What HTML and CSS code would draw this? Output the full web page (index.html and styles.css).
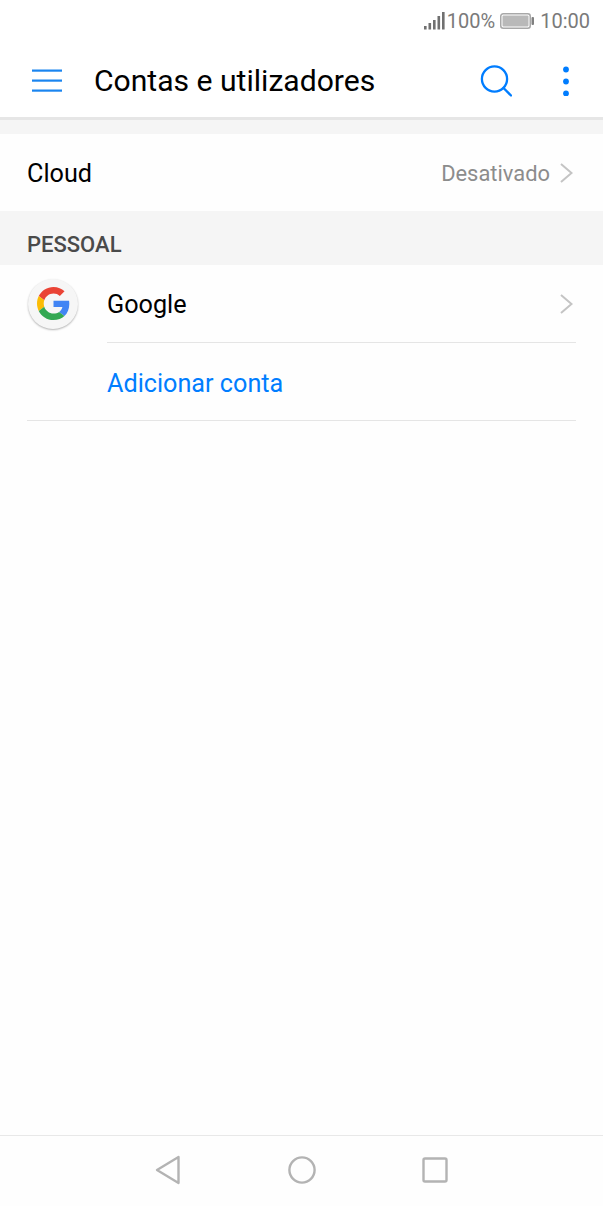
FILE: index.html
```html
<!DOCTYPE html>
<html lang="pt">
<head>
    <meta charset="UTF-8">
    <meta name="viewport" content="width=device-width, initial-scale=1.0">
    <title>Contas e utilizadores</title>
    <link rel="stylesheet" href="styles.css">
</head>
<body>
<div class="screen">
    <div class="status-bar">
        <svg class="signal" width="21" height="20" viewBox="0 0 21 20">
            <rect x="0" y="15" width="2.6" height="3.5" fill="#707070"/>
            <rect x="4.5" y="12" width="2.6" height="6.5" fill="#707070"/>
            <rect x="9" y="9" width="2.6" height="9.5" fill="#707070"/>
            <rect x="13.5" y="5" width="2.6" height="13.5" fill="#707070"/>
            <rect x="18" y="1" width="2.6" height="17.5" fill="#707070"/>
        </svg>
        <span class="status-text">100%</span>
        <svg class="battery" width="35" height="18" viewBox="0 0 35 18">
            <rect x="0.75" y="1.75" width="29.5" height="14.5" rx="2.5" fill="none" stroke="#a8a8a8" stroke-width="1.5"/>
            <rect x="2.5" y="3.5" width="26" height="11" rx="1" fill="#b9b9b9"/>
            <rect x="31.5" y="5" width="2.5" height="8" rx="1" fill="#808080"/>
        </svg>
        <span class="status-text">10:00</span>
    </div>

    <header class="app-bar">
        <svg class="menu-icon" width="30" height="23" viewBox="0 0 30 23">
            <rect x="0" y="0.5" width="30" height="2.2" fill="#1a85f0"/>
            <rect x="0" y="10.5" width="30" height="2.2" fill="#1a85f0"/>
            <rect x="0" y="20.5" width="30" height="2.2" fill="#1a85f0"/>
        </svg>
        <h1 class="app-title">Contas e utilizadores</h1>
        <svg class="search-icon" width="32" height="32" viewBox="0 0 32 32">
            <circle cx="14.5" cy="14" r="12.6" fill="none" stroke="#007dff" stroke-width="2.3"/>
            <path d="M23.5 23 L31 30.5" fill="none" stroke="#007dff" stroke-width="2.3" stroke-linecap="round"/>
        </svg>
        <svg class="more-icon" width="8" height="30" viewBox="0 0 8 30">
            <circle cx="4" cy="3.5" r="2.9" fill="#007dff"/>
            <circle cx="4" cy="15.5" r="2.9" fill="#007dff"/>
            <circle cx="4" cy="27.5" r="2.9" fill="#007dff"/>
        </svg>
    </header>

    <div class="top-gap"></div>

    <div class="row row-cloud">
        <span class="row-label">Cloud</span>
        <span class="row-value">Desativado</span>
        <svg class="chevron" width="13" height="20" viewBox="0 0 13 20">
            <path d="M1 1 L11.5 10 L1 19" fill="none" stroke="#c4c4c4" stroke-width="2"/>
        </svg>
    </div>

    <div class="section-title">PESSOAL</div>

    <div class="row row-account">
        <div class="google-badge">
            <svg width="33" height="33" viewBox="0 0 48 48">
                <path fill="#ea4335" d="M24 9.5c3.54 0 6.71 1.22 9.21 3.6l6.85-6.85C35.9 2.38 30.47 0 24 0 14.62 0 6.51 5.38 2.56 13.22l7.98 6.19C12.43 13.72 17.74 9.5 24 9.5z"/>
                <path fill="#4285f4" d="M46.98 24.55c0-1.57-.15-3.09-.38-4.55H24v9.02h12.94c-.58 2.96-2.26 5.48-4.78 7.18l7.73 6c4.51-4.18 7.09-10.36 7.09-17.65z"/>
                <path fill="#fbbc05" d="M10.53 28.59c-.48-1.45-.76-2.99-.76-4.59s.27-3.14.76-4.59l-7.98-6.19C.92 16.46 0 20.12 0 24c0 3.88.92 7.54 2.56 10.78l7.97-6.19z"/>
                <path fill="#34a853" d="M24 48c6.48 0 11.93-2.13 15.89-5.81l-7.73-6c-2.15 1.45-4.92 2.3-8.16 2.3-6.26 0-11.57-4.22-13.47-9.91l-7.98 6.19C6.51 42.62 14.62 48 24 48z"/>
            </svg>
        </div>
        <div class="row-body row-body-line">
            <span class="row-label">Google</span>
            <svg class="chevron" width="13" height="20" viewBox="0 0 13 20">
                <path d="M1 1 L11.5 10 L1 19" fill="none" stroke="#c4c4c4" stroke-width="2"/>
            </svg>
        </div>
    </div>

    <div class="add-row">
        <span class="add-link">Adicionar conta</span>
    </div>

    <div class="spacer"></div>

    <nav class="nav-bar">
        <svg width="26" height="30" viewBox="0 0 26 30">
            <path d="M23.5 2 L2 15 L23.5 28 Z" fill="none" stroke="#b3b3b3" stroke-width="2.4" stroke-linejoin="round"/>
        </svg>
        <svg width="28" height="28" viewBox="0 0 28 28">
            <circle cx="14" cy="14" r="12.6" fill="none" stroke="#b3b3b3" stroke-width="2.4"/>
        </svg>
        <svg width="26" height="26" viewBox="0 0 26 26">
            <rect x="1.5" y="1.5" width="23" height="23" rx="1.5" fill="none" stroke="#b3b3b3" stroke-width="2.4"/>
        </svg>
    </nav>
</div>
</body>
</html>
```

FILE: styles.css
```css
* {
    box-sizing: border-box;
}

body {
    margin: 0;
    font-family: Roboto, "Noto Sans", sans-serif;
    background-color: #fefefe;
    color: #000000;
}

.screen {
    width: 603px;
    height: 1206px;
    display: flex;
    flex-direction: column;
    overflow: hidden;
}

/* Status bar */
.status-bar {
    height: 44px;
    padding: 0 13px 2px 0;
    display: flex;
    align-items: center;
    justify-content: flex-end;
    background-color: #ffffff;
}

.signal {
    margin-right: 2px;
}

.battery {
    margin: 0 5px;
}

.status-text {
    font-size: 20px;
    color: #7a7a7a;
}

/* App bar */
.app-bar {
    height: 76px;
    display: flex;
    align-items: center;
    background-color: #ffffff;
    border-bottom: 3px solid #e6e6e6;
}

.menu-icon {
    margin-left: 32px;
}

.app-title {
    flex: 1;
    margin: 0 0 0 32px;
    font-size: 30.1px;
    font-weight: 400;
}

.search-icon {
    margin-right: 50px;
}

.more-icon {
    margin-right: 33px;
}

.top-gap {
    height: 14px;
    background-color: #f5f5f5;
}

/* Rows */
.row {
    display: flex;
    align-items: center;
}

.row-cloud {
    height: 77px;
    padding: 0 30px 0 27px;
}

.row-label {
    flex: 1;
    padding-top: 2px;
    font-size: 25.2px;
}

.row-value {
    padding-top: 2px;
    font-size: 21.9px;
    color: #8c8c8c;
    margin-right: 10px;
}

.section-title {
    height: 54px;
    padding: 22px 0 0 27px;
    font-size: 22px;
    font-weight: 500;
    line-height: 24px;
    color: #4a4a4a;
    background-color: #f5f5f5;
}

.row-account {
    height: 78px;
    padding: 0 27px;
}

.google-badge {
    width: 50px;
    height: 50px;
    flex-shrink: 0;
    margin-top: -1px;
    margin-left: 1px;
    margin-right: 29px;
    display: flex;
    align-items: center;
    justify-content: center;
    border-radius: 50%;
    background-color: #f6f6f6;
    box-shadow: 0 1px 2px rgba(0, 0, 0, 0.3);
}

.row-body {
    flex: 1;
    height: 100%;
    display: flex;
    align-items: center;
    padding-right: 3px;
}

.row-body-line {
    border-bottom: 1px solid #e5e5e5;
}

.add-row {
    height: 78px;
    margin: 0 27px 0 107px;
    display: flex;
    align-items: center;
    position: relative;
}

.add-row::after {
    content: "";
    position: absolute;
    left: -80px;
    right: 0;
    bottom: 0;
    border-bottom: 1px solid #e5e5e5;
}

.add-link {
    padding-top: 2px;
    font-size: 25.2px;
    color: #007dff;
}

.spacer {
    flex: 1;
}

/* Navigation bar */
.nav-bar {
    height: 71px;
    padding: 0 155px 2px 155px;
    display: flex;
    align-items: center;
    justify-content: space-between;
    border-top: 1px solid #e8e8e8;
}
```
